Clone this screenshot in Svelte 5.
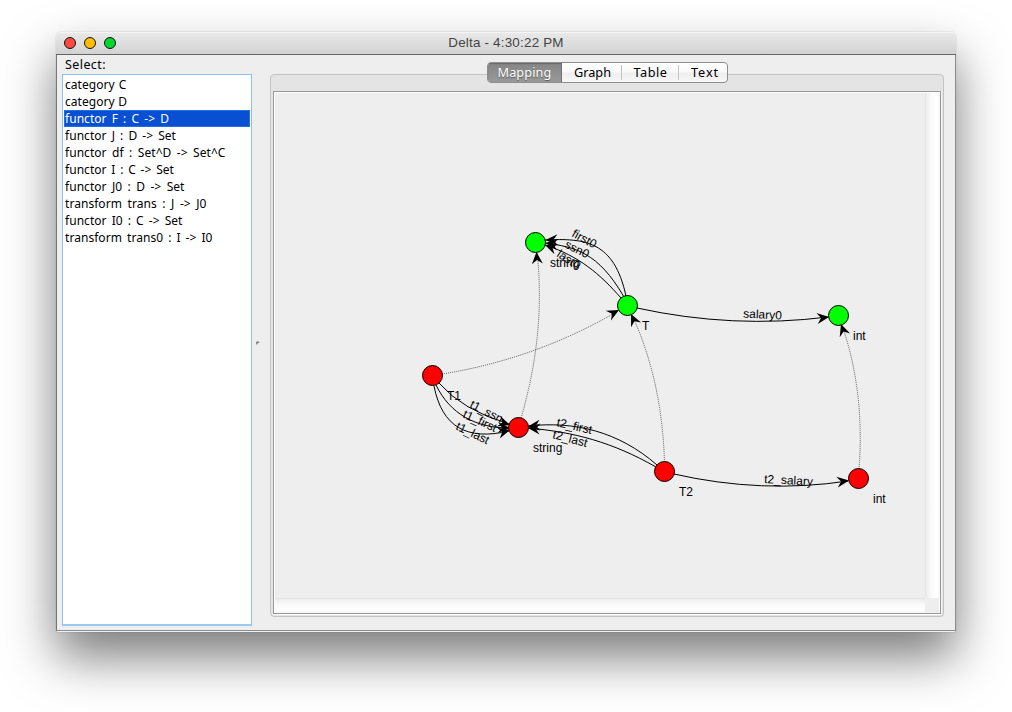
<script>
  const rows = [
    { text: 'category C', w: 61.5 },
    { text: 'category D', w: 62 },
    { text: 'functor F : C -> D', w: 104 },
    { text: 'functor J : D -> Set', w: 111 },
    { text: 'functor df : Set^D -> Set^C', w: 160.5 },
    { text: 'functor I : C -> Set', w: 109 },
    { text: 'functor J0 : D -> Set', w: 119.5 },
    { text: 'transform trans : J -> J0', w: 141.5 },
    { text: 'functor I0 : C -> Set', w: 117.5 },
    { text: 'transform trans0 : I -> I0', w: 147.5 }
  ];
  const selected = 2;

  const tabs = [
    { text: 'Mapping', w: 54, box: 74 },
    { text: 'Graph', w: 37, box: 59 },
    { text: 'Table', w: 34, box: 57 },
    { text: 'Text', w: 28, box: 52 }
  ];

  // Stretches a label to its nominal width by spreading its letters.
  function fit(node, width) {
    const apply = () => {
      node.style.letterSpacing = '0px';
      const natural = node.getBoundingClientRect().width;
      node.style.letterSpacing = (width - natural) / node.textContent.length + 'px';
    };
    apply();
    document.fonts.ready.then(apply);
  }

  // Same, but only the gaps between words take up the difference.
  function fitWords(node, width) {
    const apply = () => {
      node.style.wordSpacing = '0px';
      const natural = node.getBoundingClientRect().width;
      const gaps = node.textContent.split(' ').length - 1;
      node.style.wordSpacing = (width - natural) / gaps + 'px';
    };
    apply();
    document.fonts.ready.then(apply);
  }

  const nodes = [
    { x: 535.5, y: 242.5, c: '#0f0', label: 'string' },
    { x: 627.5, y: 305.5, c: '#0f0', label: 'T' },
    { x: 838.5, y: 315.5, c: '#0f0', label: 'int' },
    { x: 432.5, y: 375.5, c: '#f00', label: 'T1' },
    { x: 518.5, y: 427.5, c: '#f00', label: 'string' },
    { x: 664.5, y: 471.5, c: '#f00', label: 'T2' },
    { x: 858.5, y: 478.5, c: '#f00', label: 'int' }
  ];

  const edges = [
    { d: 'M626 296 C614 241 585 238 545 240', tip: [545.5, 240], a: 179 },
    { d: 'M624 297 C598 252 575 247 545 243', tip: [545.5, 243], a: 187 },
    { d: 'M621 298 C600 274 579 256 545 245', tip: [545, 245], a: 200 },
    { d: 'M637 308 Q733 329 828 317', tip: [829, 317], a: -7 },
    { d: 'M439 383 Q462 410 509 424', tip: [510, 425], a: 18 },
    { d: 'M436 385 C450 414 476 428 509 428', tip: [510, 428], a: 2 },
    { d: 'M434 386 C442 427 467 441 509 431', tip: [510, 430], a: -15 },
    { d: 'M657 465 C618 431 574 421 528 426', tip: [528, 426.5], a: 174 },
    { d: 'M656 467 C612 442 574 432 528 428', tip: [528, 428], a: 185 },
    { d: 'M674 474 Q762 494 848 481', tip: [849, 480.5], a: -8 },
    { d: 'M442 374 Q536 359 618 311', tip: [619, 310], a: -28, dash: true },
    { d: 'M521 418 Q546 333 537 252', tip: [536.5, 252], a: -94, dash: true },
    { d: 'M664.500 462 Q662 380 632 315', tip: [631, 314], a: -115, dash: true },
    { d: 'M859 469 Q865 392 842 325', tip: [841, 324], a: -109, dash: true }
  ];

  const names = [
    { t: 'first0', x: 571, y: 236, a: 29 },
    { t: 'ssn0', x: 564, y: 247, a: 27 },
    { t: 'last0', x: 556, y: 256, a: 33 },
    { t: 'salary0', x: 743, y: 317.5, a: 3 },
    { t: 't1_ssn', x: 469, y: 407, a: 27 },
    { t: 't1_first', x: 462, y: 417, a: 25 },
    { t: 't1_last', x: 455, y: 429, a: 26 },
    { t: 't2_first', x: 556, y: 426, a: 13 },
    { t: 't2_last', x: 552, y: 438, a: 15 },
    { t: 't2_salary', x: 764, y: 483, a: 3 }
  ];
</script>

<div class="window">
  <header class="titlebar">
    <div class="lights"><i class="close"></i><i class="min"></i><i class="max"></i></div>
    <div class="title"><span use:fit={115.5}>Delta - 4:30:22 PM</span></div>
  </header>

  <main>
    <aside>
      <div class="caption"><span use:fit={41}>Select:</span></div>
      <ul>
        {#each rows as row, i}
          <li class:selected={i === selected}><span use:fitWords={row.w}>{row.text}</span></li>
        {/each}
      </ul>
    </aside>

    <div class="divider">
      <svg width="4" height="4" viewBox="0 0 4 4"><path d="M0 1 L2 0 L4 1.500 L2 2 L1 3.500 H0 Z" fill="#888" /></svg>
    </div>

    <section class="panel">
      <nav>
        {#each tabs as tab, i}
          <button class:active={i === 0} style="width:{tab.box}px"><span use:fit={tab.w}>{tab.text}</span></button>
        {/each}
      </nav>
      <div class="frame">
        <div class="scroll">
          <svg class="graph" width="650" height="505" viewBox="275 93 650 505">
            {#each edges as e}
              <path d={e.d} class="edge" class:dash={e.dash} />
            {/each}
            {#each edges as e}
              <path d="M0 0 L-12 -5.500 L-8 0 L-12 5.500 Z" transform="translate({e.tip[0]} {e.tip[1]}) rotate({e.a})" />
            {/each}
            {#each names as n}
              <text transform="translate({n.x} {n.y}) rotate({n.a})">{n.t}</text>
            {/each}
            {#each nodes as n}
              <circle cx={n.x} cy={n.y} r="10" fill={n.c} stroke="#000" />
              <text x={n.x + 14.500} y={n.y + 24.500}>{n.label}</text>
            {/each}
          </svg>
          <div class="vbar"></div>
          <div class="hbar"></div>
          <div class="corner"></div>
        </div>
      </div>
    </section>
  </main>
</div>

<style>
  :global(body) {
    background: #fff;
  }
  :global(#app) {
    display: flow-root;
    height: 712px;
    overflow: hidden;
  }
  .window {
    box-sizing: border-box;
    width: 900px;
    height: 600px;
    margin: 32px 0 0 56px;
    padding-bottom: 1px;
    border-radius: 5px 5px 2px 2px;
    background: #f0f0f0;
    display: flex;
    flex-direction: column;
    box-shadow: 0 25px 50px rgba(0, 0, 0, 0.52), 0 0 1px rgba(0, 0, 0, 0.45);
    font-family: 'Noto Sans', 'Open Sans', sans-serif;
    color: #111;
  }
  .titlebar {
    box-sizing: border-box;
    height: 23px;
    border-bottom: 1px solid #656565;
    border-radius: 5px 5px 0 0;
    background: linear-gradient(#eaeaea, #d2d2d2);
    box-shadow: inset 0 1px #f5f5f5;
    display: grid;
    grid-template-columns: 60px 1fr 60px;
    grid-template-rows: 22px;
  }
  .lights {
    display: flex;
    gap: 8px;
    padding: 5px 0 0 8px;
  }
  .lights i {
    box-sizing: border-box;
    width: 12px;
    height: 12px;
    border-radius: 50%;
    border: 1px solid;
  }
  .close {
    background: #ff4943;
    border-color: #e8302f;
  }
  .min {
    background: #ffbd00;
    border-color: #e5a40a;
  }
  .max {
    background: #00d72c;
    border-color: #08ba22;
  }
  .title {
    text-align: center;
    font: 13.400px/22px 'Liberation Sans', Arial, sans-serif;
    color: #444;
  }
  span {
    display: inline-block;
    white-space: pre;
  }
  main {
    box-sizing: border-box;
    flex: 1;
    min-height: 0;
    display: flex;
    background: #eee;
    border: solid #8c8c8c;
    border-width: 0 1px 1px;
    border-left-color: #777;
    padding: 0 11px 0 5px;
  }
  aside {
    width: 190px;
    display: flex;
    flex-direction: column;
  }
  .caption {
    height: 19px;
    padding-left: 3px;
    font-size: 12.500px;
    line-height: 19px;
    color: #000;
  }
  ul {
    box-sizing: border-box;
    height: 552px;
    margin: 0;
    padding: 1px;
    list-style: none;
    background: #fff;
    border: 1px solid #8cc0ec;
    border-bottom: 2px solid #9bcbf3;
  }
  li {
    box-sizing: border-box;
    height: 17px;
    padding-left: 1px;
    font-size: 12px;
    line-height: 17px;
    letter-spacing: 0.050px;
    color: #000;
  }
  li.selected {
    color: #fff;
    background: #084fd1;
    box-shadow: inset 0 0 0 1px #1f6fe8;
  }
  .divider {
    width: 18px;
    height: 575px;
    display: flex;
    align-items: center;
    padding-left: 4px;
    box-sizing: border-box;
  }
  .panel {
    box-sizing: border-box;
    width: 674px;
    height: 543px;
    margin-top: 19px;
    padding: 0 2px 2px;
    border: 1px solid #c3c3c3;
    border-radius: 4px;
    background: #e4e4e4;
    display: flex;
    flex-direction: column;
  }
  nav {
    flex: none;
    height: 21px;
    margin: -13px auto 8px;
    display: flex;
    box-sizing: border-box;
    width: 241px;
    border: 1px solid #8e8e8e;
    border-radius: 4px;
    background: linear-gradient(#fff 0%, #fafafa 45%, #eeeeee 55%, #f8f8f8);
    overflow: hidden;
  }
  button {
    flex: none;
    box-sizing: border-box;
    height: 19px;
    margin: 0;
    padding: 0 0 0 3px;
    border: 0;
    background: none;
    font: 400 12.700px/19px 'Noto Sans', sans-serif;
    color: #000;
    position: relative;
  }
  button.active {
    padding-left: 0;
    color: #fff;
    background: linear-gradient(#858585, #999);
    box-shadow: inset 0 1px 1px #696969, inset -1px 0 #747474;
    text-shadow: 0 1px 1px #555;
  }
  button + button + button::before {
    content: '';
    position: absolute;
    left: 0;
    top: 2px;
    width: 1px;
    height: 15px;
    background: #c4c4c4;
  }
  .frame {
    flex: 1;
    border: 1px solid #999;
    background: #fff;
    padding: 1px 1px 0;
    box-shadow: 0 1px #fff, 1px 0 #f4f4f4;
  }
  .scroll {
    display: grid;
    grid-template-columns: 1fr 15px;
    grid-template-rows: 505px 15px;
    background: #eee;
  }
  .vbar {
    background: linear-gradient(90deg, #ddd 0, #ededed 1px, #fbfbfb 7px, #fff 12px, #f4f4f4);
  }
  .hbar {
    background: linear-gradient(#ddd 0, #ededed 1px, #fbfbfb 7px, #fff 12px, #f4f4f4);
  }
  .graph {
    display: block;
    font: 12px 'Liberation Sans', Arial, sans-serif;
  }
  .edge {
    fill: none;
    stroke: #000;
  }
  .edge.dash {
    stroke: #333;
    stroke-width: 0.8;
    stroke-dasharray: 1 1;
  }
</style>
